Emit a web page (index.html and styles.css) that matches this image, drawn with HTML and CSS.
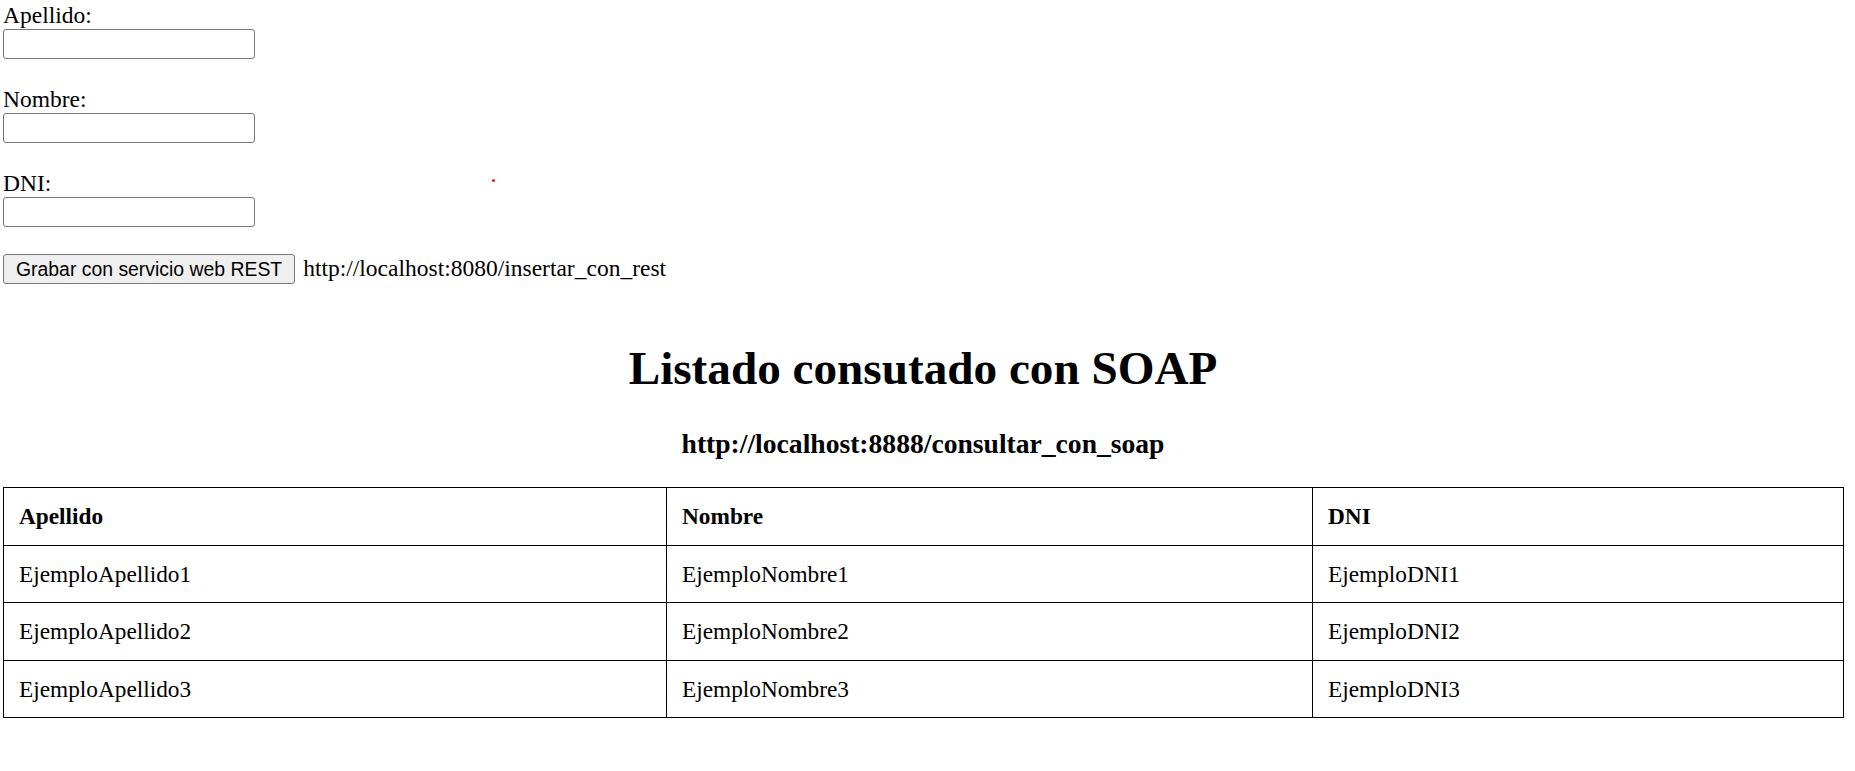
FILE: index.html
```html
<!DOCTYPE html>
<html lang="es">
<head>
<meta charset="utf-8">
<title>Listado</title>
<link rel="stylesheet" href="styles.css">
</head>
<body>
<form class="form">
  <div class="field">
    <label class="label" for="apellido">Apellido:</label>
    <input class="input" id="apellido" type="text">
  </div>
  <div class="field">
    <label class="label" for="nombre">Nombre:</label>
    <input class="input" id="nombre" type="text">
  </div>
  <div class="field">
    <label class="label" for="dni">DNI:</label>
    <input class="input" id="dni" type="text">
  </div>
  <div class="actions">
    <button class="button" type="button">Grabar con servicio web REST</button>
    <span class="url">http://localhost:8080/insertar_con_rest</span>
  </div>
</form>
<span class="dot"></span>
<h1 class="title">Listado consutado con SOAP</h1>
<h3 class="subtitle">http://localhost:8888/consultar_con_soap</h3>
<table class="table">
  <colgroup>
    <col class="c1">
    <col class="c2">
    <col class="c3">
  </colgroup>
  <thead>
    <tr><th>Apellido</th><th>Nombre</th><th>DNI</th></tr>
  </thead>
  <tbody>
    <tr><td>EjemploApellido1</td><td>EjemploNombre1</td><td>EjemploDNI1</td></tr>
    <tr><td>EjemploApellido2</td><td>EjemploNombre2</td><td>EjemploDNI2</td></tr>
    <tr><td>EjemploApellido3</td><td>EjemploNombre3</td><td>EjemploDNI3</td></tr>
  </tbody>
</table>
</body>
</html>
```
FILE: styles.css
```css
html, body {
  background: #fff;
}
body {
  margin: 0;
  padding: 2px 12px 0 3px;
  font-family: "Liberation Serif", "Times New Roman", serif;
  font-size: 23.5px;
  color: #000;
  position: relative;
}
.form {
  margin: 0;
  display: flex;
  flex-direction: column;
}
.field {
  display: flex;
  flex-direction: column;
  align-items: flex-start;
  margin-bottom: 27px;
}
.label {
  line-height: 27px;
  height: 27px;
}
.input {
  box-sizing: border-box;
  width: 252px;
  height: 30px;
  margin: 0;
  padding: 1px 3px;
  border: 1px solid #767676;
  border-radius: 3px;
  background: #fff;
  font-family: "Liberation Sans", Arial, sans-serif;
  font-size: 20px;
}
.actions {
  display: flex;
  align-items: center;
  gap: 8px;
  height: 30px;
}
.button {
  box-sizing: border-box;
  height: 30px;
  margin: 0;
  padding: 0 12px;
  border: 1px solid #767676;
  border-radius: 3px;
  background: #efefef;
  color: #000;
  font-family: "Liberation Sans", Arial, sans-serif;
  font-size: 19.4px;
  line-height: 28px;
}
.url {
  line-height: 30px;
  padding-bottom: 2px;
}
.dot {
  position: absolute;
  left: 492px;
  top: 179px;
  width: 3px;
  height: 3px;
  border-radius: 50%;
  background: #e8141c;
}
.title {
  margin: 57px 0 0;
  font-size: 47.2px;
  line-height: 55px;
  font-weight: bold;
  text-align: center;
}
.subtitle {
  margin: 32px 0 0;
  font-size: 27.6px;
  line-height: 32px;
  font-weight: bold;
  text-align: center;
}
.table {
  margin-top: 27px;
  width: 1840px;
  border-collapse: collapse;
  table-layout: fixed;
  border: 1px solid #000;
}
.c1 { width: 663px; }
.c2 { width: 646px; }
.c3 { width: 531px; }
.table th,
.table td {
  border: 1px solid #000;
  padding: 15px 15px 14.5px;
  line-height: 27px;
  text-align: left;
  font-size: 23.3px;
}
.table th {
  font-weight: bold;
}
```
